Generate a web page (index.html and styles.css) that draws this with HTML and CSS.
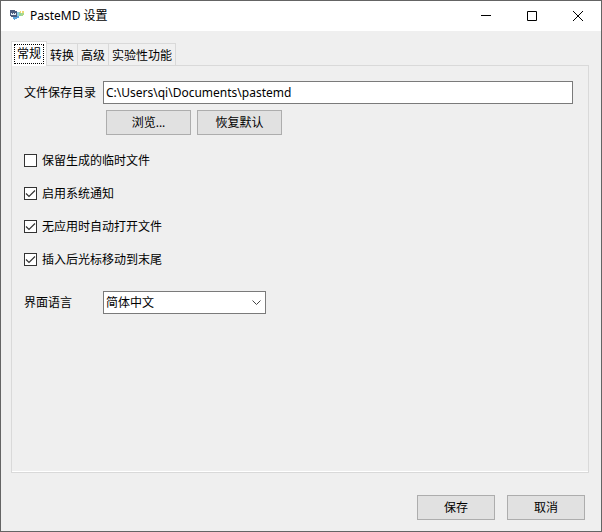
FILE: index.html
```html
<!DOCTYPE html>
<html lang="zh-CN">
<head>
<meta charset="utf-8">
<title>PasteMD 设置</title>
<link rel="stylesheet" href="styles.css">
</head>
<body>
<div class="window">
  <header class="titlebar">
    <svg class="app-icon" viewBox="0 0 16 16" aria-hidden="true">
      <path fill="#4a5c80" d="M1 2h5v1h2v6H7v1H4V9H2V8H1z"/>
      <path fill="#e6edf4" d="M2 5h1v1h1V5h1v1h1V5h1v2H2z"/>
      <path fill="#5ba3dc" d="M4 9h4V8h2v2H8v1H6v1H5v-1H4z"/>
      <path fill="#8ccbe6" d="M8 4h2v4H8z"/>
      <path fill="#8fd0a0" d="M10 4h2v4h-2z"/>
      <path fill="#f0d873" d="M11 3h1v2h-1zM13 3h2v2h-2z"/>
      <path fill="#a9d98a" d="M12 5h3v2h-1v1h-2z"/>
    </svg>
    <h1 class="title">PasteMD 设置</h1>
    <button class="caption" type="button" aria-label="最小化">
      <svg viewBox="0 0 10 10"><path d="M0 4.5h10"/></svg>
    </button>
    <button class="caption" type="button" aria-label="最大化">
      <svg viewBox="0 0 10 10"><path d="M.5.5h9v9h-9z"/></svg>
    </button>
    <button class="caption" type="button" aria-label="关闭">
      <svg viewBox="0 0 10 10"><path d="M0 0l10 10M10 0L0 10"/></svg>
    </button>
  </header>
  <form class="content">
    <div class="tabs" role="tablist">
      <button class="tab tab-active" type="button" role="tab" aria-selected="true"><span class="focus">常规</span></button>
      <button class="tab" type="button" role="tab">转换</button>
      <button class="tab" type="button" role="tab">高级</button>
      <button class="tab" type="button" role="tab">实验性功能</button>
    </div>
    <section class="panel" role="tabpanel">
      <div class="row">
        <label class="row-label" for="dir">文件保存目录</label>
        <input class="field" id="dir" type="text" value="C:\Users\qi\Documents\pastemd">
      </div>
      <div class="dir-actions">
        <button class="button button-wide" type="button">浏览...</button>
        <button class="button button-wide" type="button">恢复默认</button>
      </div>
      <div class="checks">
        <label class="check"><input type="checkbox">保留生成的临时文件</label>
        <label class="check"><input type="checkbox" checked>启用系统通知</label>
        <label class="check"><input type="checkbox" checked>无应用时自动打开文件</label>
        <label class="check"><input type="checkbox" checked>插入后光标移动到末尾</label>
      </div>
      <div class="row">
        <label class="row-label" for="lang">界面语言</label>
        <div class="select">
          <select id="lang"><option>简体中文</option></select>
          <svg class="chevron" viewBox="0 0 9 6" aria-hidden="true"><path d="M.5.5l4 4 4-4"/></svg>
        </div>
      </div>
    </section>
    <footer class="footer">
      <button class="button" type="submit">保存</button>
      <button class="button" type="button">取消</button>
    </footer>
  </form>
</div>
</body>
</html>
```
FILE: styles.css
```css
* {
  box-sizing: border-box;
}

body {
  margin: 0;
}

body,
button,
input,
select {
  font: 12px/16px "Noto Sans", "Noto Sans CJK SC", sans-serif;
  color: #000;
}

.window {
  display: flex;
  flex-direction: column;
  min-height: 100vh;
  border: 1px solid #646464;
  background: #efefef;
}

.titlebar {
  display: flex;
  align-items: center;
  height: 30px;
  padding-left: 8px;
  background: #fff;
}

.app-icon {
  width: 16px;
  height: 16px;
}

.title {
  flex: 1;
  margin: 0 0 0 5px;
  font-size: 12px;
  font-weight: 400;
}

.caption {
  display: grid;
  place-items: center;
  width: 46px;
  height: 28px;
  padding: 0;
  border: 0;
  background: none;
}

.caption svg {
  width: 10px;
  height: 10px;
  fill: none;
  stroke: #000;
}

.content {
  flex: 1;
  display: flex;
  flex-direction: column;
  padding: 10px 12px 11px 10px;
}

.tabs {
  display: flex;
  align-items: flex-end;
}

.tab {
  height: 22px;
  padding: 2px 3px 0;
  border: 1px solid #d9d9d9;
  border-width: 1px 1px 0 0;
  background: #f0f0f0;
}

.tab-active {
  position: relative;
  height: 25px;
  margin-bottom: -1px;
  padding: 2px;
  border-width: 1px 1px 0 1px;
  background: #fff;
}

.focus {
  display: block;
  height: 20px;
  padding: 1px 2px;
  border: 1px dotted #000;
}

.panel {
  flex: 1;
  padding: 15px;
  padding-left: 12px;
  border: 1px solid #d9d9d9;
  box-shadow: inset 0 -1px #fff;
}

.row {
  display: flex;
  align-items: center;
}

.row-label {
  width: 79px;
}

.field {
  flex: 1;
  min-width: 0;
  height: 23px;
  padding: 0 2px;
  border: 1px solid #7a7a7a;
  background: #fff;
}

.dir-actions {
  display: flex;
  gap: 6px;
  margin: 6px 0 0 82px;
}

.button {
  width: 78px;
  height: 25px;
  padding: 0;
  border: 1px solid #adadad;
  background: #e1e1e1;
}

.button-wide {
  width: 85px;
}

.checks {
  display: flex;
  flex-direction: column;
  align-items: flex-start;
  gap: 17px;
  margin: 18px 0 23px;
}

.check {
  display: flex;
  align-items: flex-start;
  gap: 5px;
}

.check input {
  appearance: none;
  width: 13px;
  height: 13px;
  margin: 1px 0 0;
  border: 1px solid #333;
  background: #fff;
}

.check input:checked {
  background: #fff url("data:image/svg+xml,%3Csvg xmlns='http://www.w3.org/2000/svg' viewBox='0 0 11 11'%3E%3Cpath d='M1 5.5l3 3 6-6' fill='none' stroke='%23333' stroke-width='1.2'/%3E%3C/svg%3E") center / 11px 11px no-repeat;
}

.select {
  position: relative;
  width: 163px;
}

.select select {
  display: block;
  appearance: none;
  width: 100%;
  height: 23px;
  padding: 0 20px 0 2px;
  border: 1px solid #7a7a7a;
  border-radius: 0;
  background: #fff;
}

.chevron {
  position: absolute;
  top: 9px;
  right: 5px;
  width: 9px;
  height: 6px;
  fill: none;
  stroke: #444;
  pointer-events: none;
}

.footer {
  display: flex;
  justify-content: flex-end;
  gap: 12px;
  padding: 22px 4px 0 0;
}
```
